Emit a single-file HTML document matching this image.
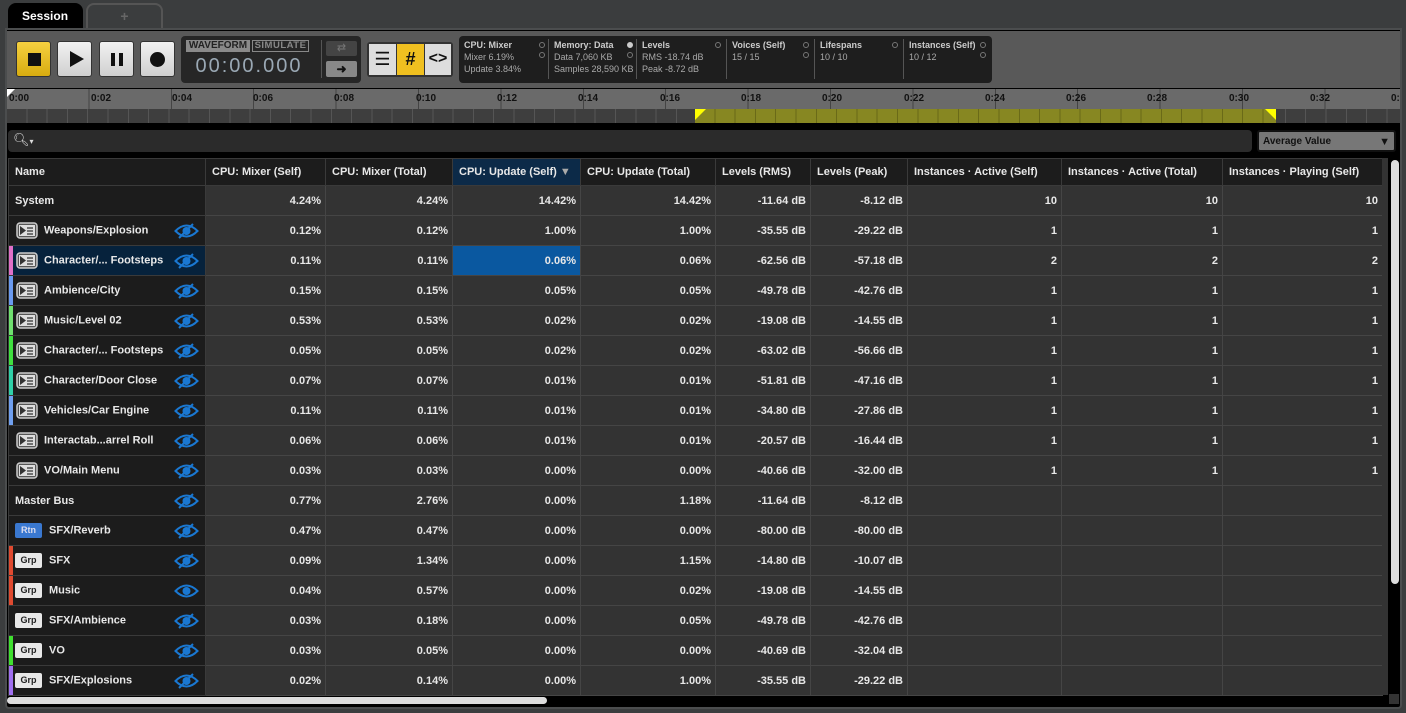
<!DOCTYPE html>
<html><head><meta charset="utf-8"><style>
*{box-sizing:border-box;margin:0;padding:0}
body{width:1406px;height:713px;background:#3b3d3e;font-family:"Liberation Sans",sans-serif;position:relative;overflow:hidden;color:#e8e8e8}
.abs{position:absolute}
.tab{position:absolute;top:3px;height:26px;border-radius:8px 8px 0 0}
.btn{position:absolute;top:41px;width:35px;height:36px;border-radius:3px;border:1px solid #333;background:linear-gradient(#f2f2f2,#cfcfcf)}
.meter{position:absolute;top:39px;font-size:9px;line-height:12px;color:#aaa;height:40px;padding-left:5px;border-left:1px solid #555;white-space:nowrap}
.meter b{color:#ccc;display:block}
.dot{position:absolute;right:3px;width:6px;height:6px;border:1px solid #777;border-radius:50%}
.tl{position:absolute;top:93px;font-size:10px;font-weight:bold;color:#111}
table{position:absolute;left:8px;top:158px;width:1374px;border-collapse:collapse;table-layout:fixed;font-size:11px;font-weight:bold}
td,th{height:30px;border:1px solid #454545;text-align:right;padding-right:4px;background:#333;white-space:nowrap;overflow:hidden}
th{height:27px;background:#1c1c1c;text-align:left;padding-left:6px;border-color:#3a3a3a}
td.n{background:#1c1c1c;text-align:left;padding-left:6px;position:relative;border-color:#3a3a3a}
.ic{display:inline-block;width:22px;height:17px;vertical-align:middle;margin-right:6px;margin-left:1px}
.tg{display:inline-block;width:27px;height:15px;border-radius:2px;background:#e8e8e8;color:#222;font-size:9px;text-align:center;line-height:15px;vertical-align:middle;margin-right:7px}
.eye{position:absolute;right:6px;top:7px;width:25px;height:16px}
.s1{box-shadow:inset 4px 0 #e070c8}.s2{box-shadow:inset 4px 0 #6a9af0}.s3{box-shadow:inset 4px 0 #70e070}.s4{box-shadow:inset 4px 0 #40e040}.s5{box-shadow:inset 4px 0 #30d0a8}.s6{box-shadow:inset 4px 0 #70a0f0}.s7{box-shadow:inset 4px 0 #e04a30}.s8{box-shadow:inset 4px 0 #40e030}.s9{box-shadow:inset 4px 0 #a070f0}
</style></head><body>
<svg width="0" height="0" style="position:absolute"><defs>
<symbol id="ev" viewBox="0 0 22 17"><rect x="1" y="1" width="20" height="15" rx="3" fill="#555" stroke="#ccc" stroke-width="1.5"/><rect x="3" y="3" width="16" height="11" fill="#ddd"/><path d="M4 4 L10 8.5 L4 13Z" fill="#333"/><path d="M11 6h6M11 9h6M11 12h6" stroke="#333" stroke-width="1.3"/></symbol>
<symbol id="eo" viewBox="0 0 25 16"><path d="M1.5 8 Q12.5 -3 23.5 8 Q12.5 19 1.5 8Z" fill="none" stroke="#1a78d2" stroke-width="2"/><circle cx="12.5" cy="8" r="4" fill="#1a78d2"/><path d="M5 15 L19 1" stroke="#1a78d2" stroke-width="2"/></symbol>
<symbol id="ee" viewBox="0 0 25 16"><path d="M1.5 8 Q12.5 -3 23.5 8 Q12.5 19 1.5 8Z" fill="none" stroke="#1a78d2" stroke-width="2"/><circle cx="12.5" cy="8" r="4" fill="#1a78d2"/></symbol>
</defs></svg>
<div class="tab" style="left:8px;width:75px;background:#000;font-size:12px;font-weight:bold;color:#fff;padding:6px 0 0 14px">Session</div>
<div class="tab" style="left:86px;width:77px;top:3px;border:2px solid #555;border-bottom:none;color:#666;text-align:center;font-size:14px;font-weight:bold;line-height:22px">+</div>
<div class="abs" style="left:5px;top:28px;width:1397px;height:681px;background:#000;border:2px solid #4b4d4e;border-radius:0 0 4px 4px"></div>
<div class="abs" style="left:7px;top:31px;width:1393px;height:57px;background:#595959"></div>
<div class="btn" style="left:16px;background:linear-gradient(#f5d040,#d8ac10)"><div class="abs" style="left:11px;top:11px;width:13px;height:13px;background:#111"></div></div>
<div class="btn" style="left:57px"><div class="abs" style="left:12px;top:9px;border-left:14px solid #111;border-top:8px solid transparent;border-bottom:8px solid transparent"></div></div>
<div class="btn" style="left:99px"><div class="abs" style="left:11px;top:11px;width:4px;height:13px;background:#111"></div><div class="abs" style="left:19px;top:11px;width:4px;height:13px;background:#111"></div></div>
<div class="btn" style="left:140px"><div class="abs" style="left:9px;top:10px;width:15px;height:15px;border-radius:50%;background:#111"></div></div>
<div class="abs" style="left:181px;top:36px;width:180px;height:47px;background:#262626;border-radius:4px"></div>
<div class="abs" style="left:186px;top:40px;width:64px;height:12px;background:#8a8a8a;color:#222;font-size:10px;font-weight:bold;text-align:center;line-height:12px">WAVEFORM</div>
<div class="abs" style="left:252px;top:40px;width:57px;height:12px;border:1px solid #888;color:#888;font-size:9.5px;font-weight:bold;text-align:center;line-height:10px;letter-spacing:.5px">SIMULATE</div>
<div class="abs" style="left:186px;top:55px;width:126px;font-size:20px;color:#9aa8b4;text-align:center;letter-spacing:2px">00:00.000</div>
<div class="abs" style="left:321px;top:40px;width:1px;height:38px;background:#555"></div>
<div class="abs" style="left:326px;top:41px;width:31px;height:15px;background:#444;border-radius:2px;color:#777;text-align:center;font-size:11px;line-height:15px">⇄</div>
<div class="abs" style="left:326px;top:61px;width:31px;height:16px;background:#888;border-radius:2px;color:#111;text-align:center;font-size:12px;line-height:16px;font-weight:bold">➜</div>
<div class="abs" style="left:367px;top:42px;width:86px;height:35px;background:#333;border-radius:3px"></div>
<div class="abs" style="left:369px;top:44px;width:27px;height:31px;background:#ddd;color:#111;font-size:18px;text-align:center;line-height:30px">☰</div>
<div class="abs" style="left:397px;top:44px;width:27px;height:31px;background:#f0c020;color:#111;font-size:18px;text-align:center;line-height:30px;font-weight:bold">#</div>
<div class="abs" style="left:425px;top:44px;width:26px;height:31px;background:#ddd;color:#111;font-size:16px;text-align:center;line-height:30px;font-weight:bold">&lt;&gt;</div>
<div class="abs" style="left:459px;top:36px;width:533px;height:47px;background:#1e1e1e;border-radius:4px"></div>
<div class="meter" style="left:459px;width:89px;border:none"><b>CPU: Mixer</b>Mixer 6.19%<br>Update 3.84%<span class="dot" style="top:3px"></span><span class="dot" style="top:13px"></span></div>
<div class="meter" style="left:548px;width:88px"><b>Memory: Data</b>Data 7,060 KB<br>Samples 28,590 KB<span class="dot" style="top:3px;background:#ccc;border-color:#ccc"></span><span class="dot" style="top:13px"></span></div>
<div class="meter" style="left:636px;width:88px"><b>Levels</b>RMS -18.74 dB<br>Peak -8.72 dB<span class="dot" style="top:3px"></span></div>
<div class="meter" style="left:726px;width:86px"><b>Voices (Self)</b>15 / 15<span class="dot" style="top:3px"></span><span class="dot" style="top:13px"></span></div>
<div class="meter" style="left:814px;width:87px"><b>Lifespans</b>10 / 10<span class="dot" style="top:3px"></span></div>
<div class="meter" style="left:903px;width:86px"><b>Instances (Self)</b>10 / 12<span class="dot" style="top:3px"></span><span class="dot" style="top:13px"></span></div>
<div class="abs" style="left:7px;top:89px;width:1393px;height:20px;background:#6a6a6a"></div>
<div class="abs" style="left:7px;top:109px;width:1393px;height:14px;background:#3e3e3e;background-image:repeating-linear-gradient(90deg,transparent 0 19.3px,#555 19.3px 20.3px)"></div>
<div class="abs" style="left:695px;top:109px;width:581px;height:14px;background:#878722;background-image:repeating-linear-gradient(90deg,transparent 0 19.3px,#6a6a18 19.3px 20.3px)"></div>
<div class="abs" style="left:695px;top:109px;border-top:11px solid #ff0;border-right:11px solid transparent"></div>
<div class="abs" style="left:1265px;top:109px;border-top:11px solid #ff0;border-left:11px solid transparent"></div>
<div class="abs" style="left:7px;top:89px;border-top:8px solid #fff;border-right:8px solid transparent"></div>
<div class="abs" style="left:7px;top:89px;width:1393px;height:20px;background-image:repeating-linear-gradient(90deg,transparent 0 81.4px,#444 81.4px 82.4px)"></div>
<div class="tl" style="left:9px">0:00</div><div class="tl" style="left:91px">0:02</div><div class="tl" style="left:172px">0:04</div><div class="tl" style="left:253px">0:06</div><div class="tl" style="left:334px">0:08</div><div class="tl" style="left:416px">0:10</div><div class="tl" style="left:497px">0:12</div><div class="tl" style="left:578px">0:14</div><div class="tl" style="left:660px">0:16</div><div class="tl" style="left:741px">0:18</div><div class="tl" style="left:822px">0:20</div><div class="tl" style="left:904px">0:22</div><div class="tl" style="left:985px">0:24</div><div class="tl" style="left:1066px">0:26</div><div class="tl" style="left:1147px">0:28</div><div class="tl" style="left:1229px">0:30</div><div class="tl" style="left:1310px">0:32</div><div class="tl" style="left:1391px">0:</div>
<div class="abs" style="left:8px;top:130px;width:1244px;height:22px;background:#2b2b2b;border-radius:4px;color:#ddd;font-size:13px;padding:2px 5px">&#x1F50D;&#xFE0E;<span style="font-size:8px">▾</span></div>
<div class="abs" style="left:1257px;top:130px;width:139px;height:22px;background:#777;border:2px solid #111;border-radius:3px;color:#111;font-size:10px;font-weight:bold;padding:4px 4px;line-height:12px">Average Value<span style="float:right;font-size:11px">▼</span></div>
<table>
<colgroup><col style="width:197px"><col style="width:120px"><col style="width:127px"><col style="width:128px"><col style="width:135px"><col style="width:95px"><col style="width:97px"><col style="width:154px"><col style="width:161px"><col style="width:160px"></colgroup>
<tr><th>Name</th><th>CPU: Mixer (Self)</th><th>CPU: Mixer (Total)</th><th style="background:#0c2a48">CPU: Update (Self) <span style="color:#aaa">▼</span></th><th>CPU: Update (Total)</th><th>Levels (RMS)</th><th>Levels (Peak)</th><th>Instances · Active (Self)</th><th>Instances · Active (Total)</th><th>Instances · Playing (Self)</th></tr>
<tr><td class="n">System</td><td>4.24%</td><td>4.24%</td><td>14.42%</td><td>14.42%</td><td>-11.64 dB</td><td>-8.12 dB</td><td>10</td><td>10</td><td>10</td></tr>
<tr><td class="n"><svg class="ic"><use href="#ev"/></svg>Weapons/Explosion<svg class="eye"><use href="#eo"/></svg></td><td>0.12%</td><td>0.12%</td><td>1.00%</td><td>1.00%</td><td>-35.55 dB</td><td>-29.22 dB</td><td>1</td><td>1</td><td>1</td></tr>
<tr><td class="n s1" style="background:#06223c"><svg class="ic"><use href="#ev"/></svg>Character/... Footsteps<svg class="eye"><use href="#eo"/></svg></td><td>0.11%</td><td>0.11%</td><td style="background:#0a58a0">0.06%</td><td>0.06%</td><td>-62.56 dB</td><td>-57.18 dB</td><td>2</td><td>2</td><td>2</td></tr>
<tr><td class="n s2"><svg class="ic"><use href="#ev"/></svg>Ambience/City<svg class="eye"><use href="#eo"/></svg></td><td>0.15%</td><td>0.15%</td><td>0.05%</td><td>0.05%</td><td>-49.78 dB</td><td>-42.76 dB</td><td>1</td><td>1</td><td>1</td></tr>
<tr><td class="n s3"><svg class="ic"><use href="#ev"/></svg>Music/Level 02<svg class="eye"><use href="#eo"/></svg></td><td>0.53%</td><td>0.53%</td><td>0.02%</td><td>0.02%</td><td>-19.08 dB</td><td>-14.55 dB</td><td>1</td><td>1</td><td>1</td></tr>
<tr><td class="n s4"><svg class="ic"><use href="#ev"/></svg>Character/... Footsteps<svg class="eye"><use href="#eo"/></svg></td><td>0.05%</td><td>0.05%</td><td>0.02%</td><td>0.02%</td><td>-63.02 dB</td><td>-56.66 dB</td><td>1</td><td>1</td><td>1</td></tr>
<tr><td class="n s5"><svg class="ic"><use href="#ev"/></svg>Character/Door Close<svg class="eye"><use href="#eo"/></svg></td><td>0.07%</td><td>0.07%</td><td>0.01%</td><td>0.01%</td><td>-51.81 dB</td><td>-47.16 dB</td><td>1</td><td>1</td><td>1</td></tr>
<tr><td class="n s6"><svg class="ic"><use href="#ev"/></svg>Vehicles/Car Engine<svg class="eye"><use href="#eo"/></svg></td><td>0.11%</td><td>0.11%</td><td>0.01%</td><td>0.01%</td><td>-34.80 dB</td><td>-27.86 dB</td><td>1</td><td>1</td><td>1</td></tr>
<tr><td class="n"><svg class="ic"><use href="#ev"/></svg>Interactab...arrel Roll<svg class="eye"><use href="#eo"/></svg></td><td>0.06%</td><td>0.06%</td><td>0.01%</td><td>0.01%</td><td>-20.57 dB</td><td>-16.44 dB</td><td>1</td><td>1</td><td>1</td></tr>
<tr><td class="n"><svg class="ic"><use href="#ev"/></svg>VO/Main Menu<svg class="eye"><use href="#eo"/></svg></td><td>0.03%</td><td>0.03%</td><td>0.00%</td><td>0.00%</td><td>-40.66 dB</td><td>-32.00 dB</td><td>1</td><td>1</td><td>1</td></tr>
<tr><td class="n">Master Bus<svg class="eye"><use href="#eo"/></svg></td><td>0.77%</td><td>2.76%</td><td>0.00%</td><td>1.18%</td><td>-11.64 dB</td><td>-8.12 dB</td><td></td><td></td><td></td></tr>
<tr><td class="n"><span class="tg" style="background:#3a78d0;color:#dde">Rtn</span>SFX/Reverb<svg class="eye"><use href="#eo"/></svg></td><td>0.47%</td><td>0.47%</td><td>0.00%</td><td>0.00%</td><td>-80.00 dB</td><td>-80.00 dB</td><td></td><td></td><td></td></tr>
<tr><td class="n s7"><span class="tg">Grp</span>SFX<svg class="eye"><use href="#eo"/></svg></td><td>0.09%</td><td>1.34%</td><td>0.00%</td><td>1.15%</td><td>-14.80 dB</td><td>-10.07 dB</td><td></td><td></td><td></td></tr>
<tr><td class="n s7"><span class="tg">Grp</span>Music<svg class="eye"><use href="#ee"/></svg></td><td>0.04%</td><td>0.57%</td><td>0.00%</td><td>0.02%</td><td>-19.08 dB</td><td>-14.55 dB</td><td></td><td></td><td></td></tr>
<tr><td class="n"><span class="tg">Grp</span>SFX/Ambience<svg class="eye"><use href="#eo"/></svg></td><td>0.03%</td><td>0.18%</td><td>0.00%</td><td>0.05%</td><td>-49.78 dB</td><td>-42.76 dB</td><td></td><td></td><td></td></tr>
<tr><td class="n s8"><span class="tg">Grp</span>VO<svg class="eye"><use href="#eo"/></svg></td><td>0.03%</td><td>0.05%</td><td>0.00%</td><td>0.00%</td><td>-40.69 dB</td><td>-32.04 dB</td><td></td><td></td><td></td></tr>
<tr><td class="n s9"><span class="tg">Grp</span>SFX/Explosions<svg class="eye"><use href="#eo"/></svg></td><td>0.02%</td><td>0.14%</td><td>0.00%</td><td>1.00%</td><td>-35.55 dB</td><td>-29.22 dB</td><td></td><td></td><td></td></tr>
</table>
<div class="abs" style="left:1382px;top:158px;width:6px;height:537px;background:#333"></div>
<div class="abs" style="left:1391px;top:160px;width:8px;height:424px;background:#ddd;border-radius:4px"></div>
<div class="abs" style="left:7px;top:697px;width:540px;height:7px;background:#ddd;border-radius:4px"></div>
<div class="abs" style="left:1389px;top:694px;width:10px;height:10px;background:#333"></div>
</body></html>
